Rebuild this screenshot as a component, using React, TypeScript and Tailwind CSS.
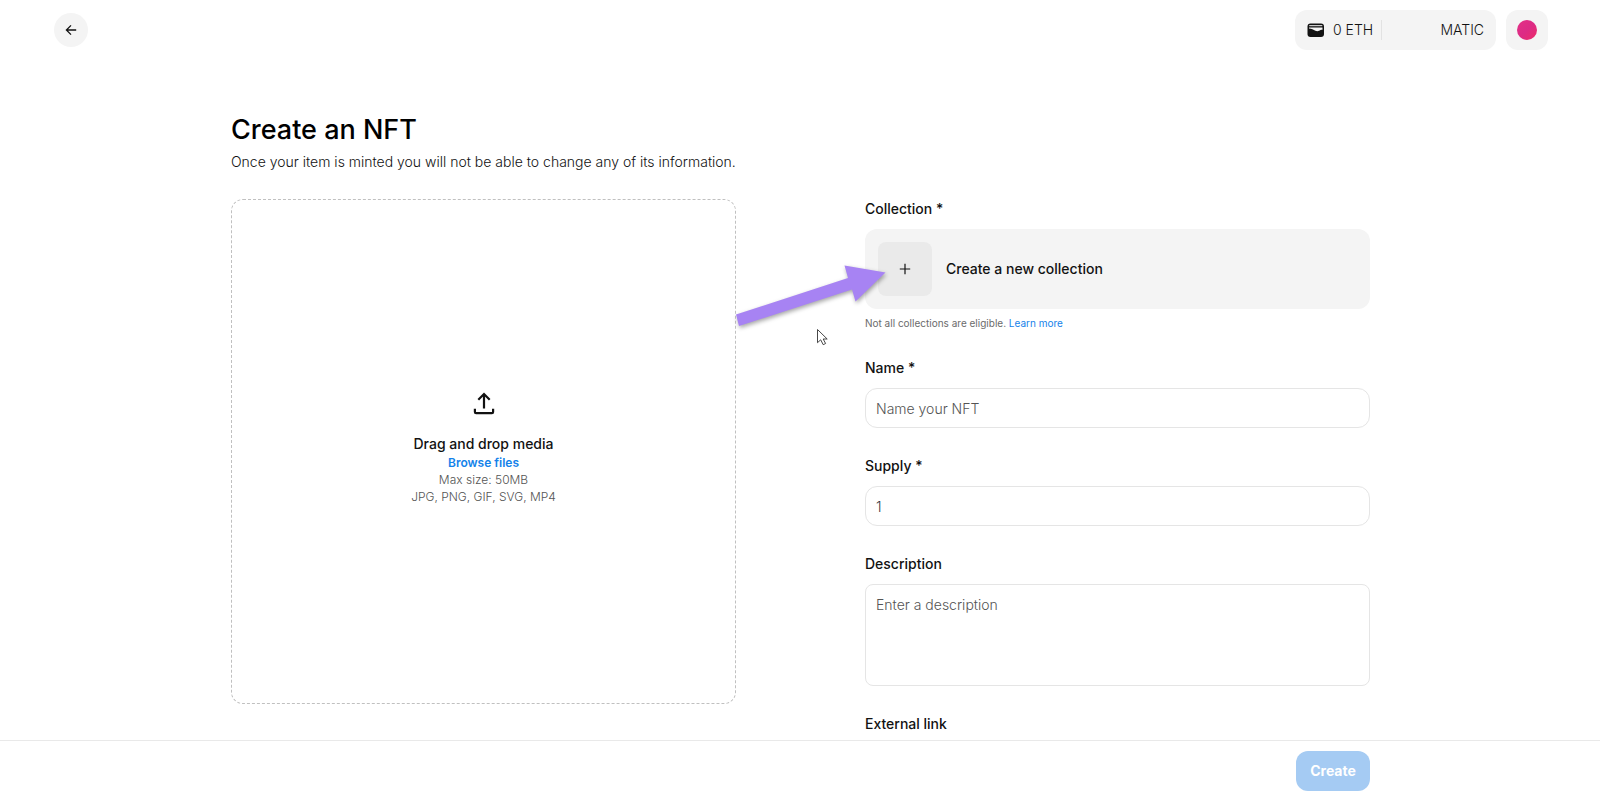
import { useState } from 'react';
import type { ReactNode } from 'react';

interface FieldProps {
  id: string;
  label: string;
  children: ReactNode;
}

const inputClass =
  'block w-full border border-[#e5e5e5] bg-white px-2.5 text-[14px] leading-5 font-light text-[#353840] placeholder:text-[#545454] outline-none focus:border-gray-400';

function Field({ id, label, children }: FieldProps) {
  return (
    <div>
      <label htmlFor={id} className="block mb-2.5 text-[14px] leading-5 font-medium text-[#121212]">
        {label}
      </label>
      {children}
    </div>
  );
}

function WalletIcon() {
  return (
    <svg className="w-[18px] h-[18px]" viewBox="0 0 18 18" fill="none">
      <rect x="0.5" y="2.5" width="16.5" height="13.5" rx="3" fill="#121212" />
      <path d="M2.6 4.7h12.3" stroke="#f4f4f4" strokeWidth="1" strokeLinecap="round" />
      <path d="M2 6.400h13.500v2.300c-1.500 0-2.500.4-3.500 1.100-1 .7-2.400.6-3.600 0C6.500 8.800 4.500 7.900 2 7.600z" fill="#f4f4f4" />
    </svg>
  );
}

function Header() {
  return (
    <header className="flex h-[60px] shrink-0 items-center justify-between pl-[54px] pr-[52px]">
      <button
        type="button"
        aria-label="Back"
        className="flex size-[34px] items-center justify-center rounded-full bg-[#f4f4f4]"
      >
        <svg className="size-[14px]" viewBox="0 0 14 14" fill="none" stroke="#121212" strokeWidth="1.3">
          <path d="M12.200 7H2.600M7 2.400 2.400 7 7 11.600" />
        </svg>
      </button>

      <div className="flex items-center gap-2.5">
        <button
          type="button"
          className="flex h-10 w-[201px] items-center rounded-xl bg-[#f4f4f4] px-3 text-[14px] leading-5 font-light text-[#121212]"
        >
          <WalletIcon />
          <span className="ml-2">0 ETH</span>
          <span className="ml-2 h-5 border-l border-[#e2e2e2]" />
          <span className="ml-auto">MATIC</span>
        </button>
        <button
          type="button"
          aria-label="Account"
          className="flex h-10 w-[42px] items-center justify-center rounded-xl bg-[#f4f4f4]"
        >
          <span className="size-5 rounded-full bg-linear-to-br from-[#e42f86] via-[#dc2b85] to-[#ee2a66]" />
        </button>
      </div>
    </header>
  );
}

function UploadBox() {
  return (
    <div className="flex aspect-square flex-col items-center justify-center rounded-xl border border-dashed border-[#c0c0c0] pb-2.5 text-center">
      <svg
        className="mb-4 size-[30px]"
        viewBox="0 0 30 30"
        fill="none"
        stroke="#121212"
        strokeWidth="2.2"
      >
        <path d="M15 20.500V6.500M9.300 11.700 15 6l5.700 5.700" />
        <path d="M5.900 20.800v3.100a1.200 1.200 0 0 0 1.200 1.200h15.800a1.200 1.200 0 0 0 1.200-1.200v-3.100" />
      </svg>
      <p className="text-[14px] leading-5 font-medium text-[#121212]">Drag and drop media</p>
      <button type="button" className="text-[12px] leading-[17px] font-semibold text-[#1482ea]">
        Browse files
      </button>
      <p className="text-[12px] leading-[17px] font-light text-[#545454]">Max size: 50MB</p>
      <p className="text-[12px] leading-[17px] font-light text-[#545454]">JPG, PNG, GIF, SVG, MP4</p>
    </div>
  );
}

// Arrow pointing at the "new collection" tile, plus the mouse pointer
function Pointer() {
  return (
    <svg
      className="pointer-events-none absolute -left-[131px] top-[31px] h-[90px] w-[160px] overflow-visible"
      viewBox="0 0 160 90"
      aria-hidden="true"
    >
      <path
        d="M2 54.500 114 18l-3.500-12.500 41 7-30 29-3.500-12L5 66z"
        fill="#a783f3"
        className="drop-shadow-[1px_2px_2px_rgba(0,0,0,0.35)]"
      />
      <path
        d="M83.500 69.500v13.200l3.200-2.900 2.500 4.900 2.400-1.200-2.400-4.500h4z"
        fill="#fff"
        stroke="#333"
        strokeWidth="0.9"
        strokeLinejoin="round"
      />
    </svg>
  );
}

export default function App() {
  const [name, setName] = useState('');
  const [supply, setSupply] = useState('1');
  const [description, setDescription] = useState('');
  const [link, setLink] = useState('');

  return (
    <div className="flex h-screen flex-col bg-white font-['Inter',sans-serif] text-[#121212]">
      <Header />

      <main className="min-h-0 flex-1 overflow-y-auto pl-px [scrollbar-width:none]">
        <div className="mx-auto max-w-[1139px] pt-[52px] pb-10">
          <h1 className="text-[27px] leading-9 font-medium text-black">Create an NFT</h1>
          <p className="mt-1 text-[14px] leading-5 font-light">
            Once your item is minted you will not be able to change any of its information.
          </p>

          <div className="mt-[27px] grid grid-cols-2 items-start gap-[129px]">
            <UploadBox />

            <form id="nft-form" className="flex flex-col gap-7" onSubmit={(e) => e.preventDefault()}>
              <Field id="collection" label="Collection *">
                <div className="relative">
                  <button
                    id="collection"
                    type="button"
                    className="flex h-20 w-full items-center gap-[14px] rounded-xl bg-[#f4f4f4] px-[13px] text-[14px] leading-5 font-medium"
                  >
                    <span className="flex size-[54px] items-center justify-center rounded-lg bg-[#eaeaea]">
                      <svg className="size-3" viewBox="0 0 12 12" stroke="#121212" strokeWidth="1.2">
                        <path d="M6 .8v10.400M.8 6h10.400" />
                      </svg>
                    </span>
                    Create a new collection
                  </button>
                  <Pointer />
                </div>
                <p className="mt-[7px] text-[10px] leading-[14px] text-[#6b6b6b]">
                  Not all collections are eligible.{' '}
                  <a href="#" className="text-[#1482ea]">
                    Learn more
                  </a>
                </p>
              </Field>

              <Field id="name" label="Name *">
                <input
                  id="name"
                  className={`${inputClass} h-10 rounded-xl`}
                  placeholder="Name your NFT"
                  value={name}
                  onChange={(e) => setName(e.target.value)}
                />
              </Field>

              <Field id="supply" label="Supply *">
                <input
                  id="supply"
                  className={`${inputClass} h-10 rounded-xl`}
                  value={supply}
                  onChange={(e) => setSupply(e.target.value)}
                />
              </Field>

              <Field id="description" label="Description">
                <textarea
                  id="description"
                  className={`${inputClass} h-[102px] resize-none rounded-lg py-2.5`}
                  placeholder="Enter a description"
                  value={description}
                  onChange={(e) => setDescription(e.target.value)}
                />
              </Field>

              <Field id="link" label="External link">
                <input
                  id="link"
                  className={`${inputClass} h-10 rounded-xl`}
                  value={link}
                  onChange={(e) => setLink(e.target.value)}
                />
              </Field>
            </form>
          </div>
        </div>
      </main>

      <footer className="h-[60px] shrink-0 border-t border-[#e9e9e9] bg-white pt-2.5 pl-px">
        <div className="mx-auto flex max-w-[1139px] justify-end">
          <button
            type="submit"
            form="nft-form"
            className="h-10 w-[74px] rounded-xl bg-[#a5cbf3] text-[14px] leading-5 font-bold text-white"
          >
            Create
          </button>
        </div>
      </footer>
    </div>
  );
}
